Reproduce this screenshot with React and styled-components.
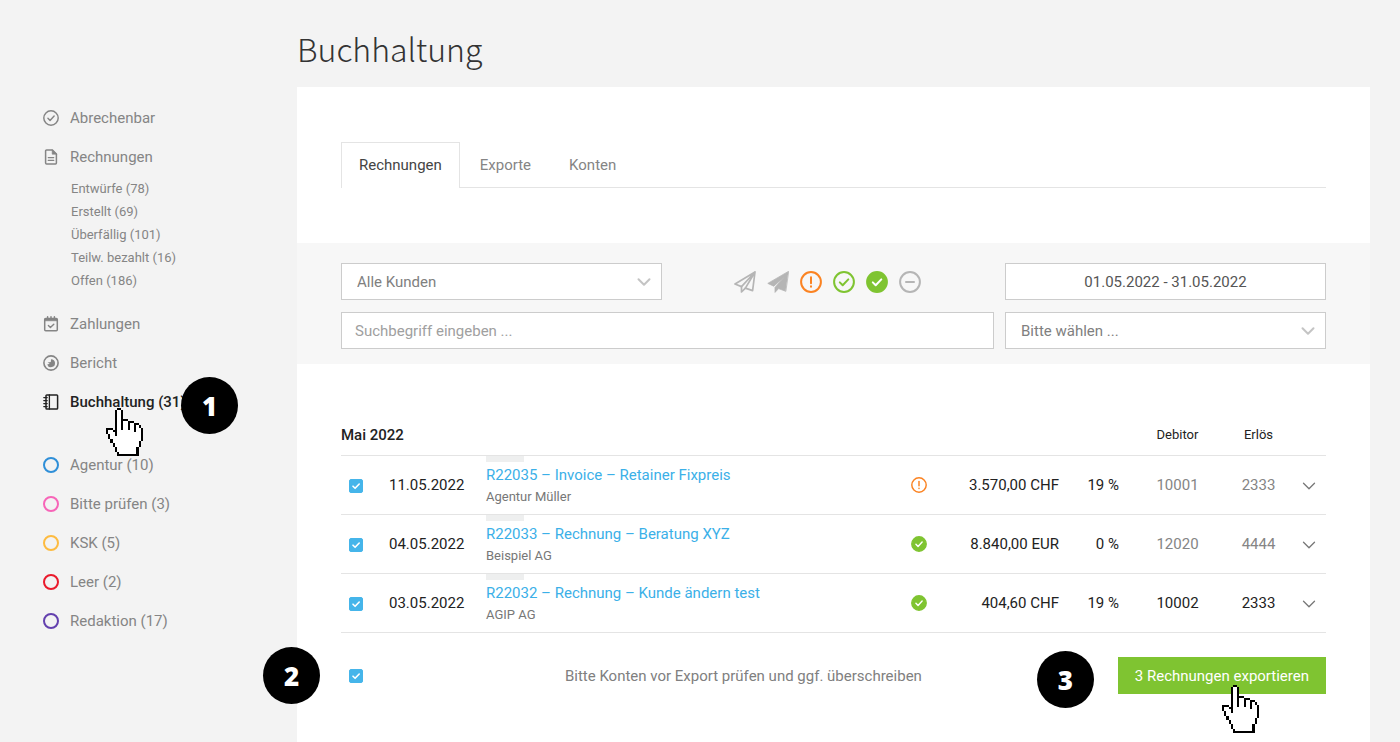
import React, { useState } from "react";
import styled, { createGlobalStyle } from "styled-components";

const rechnungenFilter = [
  "Entwürfe (78)",
  "Erstellt (69)",
  "Überfällig (101)",
  "Teilw. bezahlt (16)",
  "Offen (186)",
];

const labels = [
  { name: "Agentur (10)", color: "#2f8fd8" },
  { name: "Bitte prüfen (3)", color: "#f765b8" },
  { name: "KSK (5)", color: "#fdbb40" },
  { name: "Leer (2)", color: "#ea1a2c" },
  { name: "Redaktion (17)", color: "#6340ae" },
];

const rechnungen = [
  {
    id: "R22035",
    datum: "11.05.2022",
    titel: "R22035 – Invoice – Retainer Fixpreis",
    kunde: "Agentur Müller",
    status: "offen",
    betrag: "3.570,00 CHF",
    steuer: "19 %",
    debitor: "10001",
    erloes: "2333",
    geprueft: false,
  },
  {
    id: "R22033",
    datum: "04.05.2022",
    titel: "R22033 – Rechnung – Beratung XYZ",
    kunde: "Beispiel AG",
    status: "bezahlt",
    betrag: "8.840,00 EUR",
    steuer: "0 %",
    debitor: "12020",
    erloes: "4444",
    geprueft: false,
  },
  {
    id: "R22032",
    datum: "03.05.2022",
    titel: "R22032 – Rechnung – Kunde ändern test",
    kunde: "AGIP AG",
    status: "bezahlt",
    betrag: "404,60 CHF",
    steuer: "19 %",
    debitor: "10002",
    erloes: "2333",
    geprueft: true,
  },
];

// pixel hand, "#" = outline, "o" = fill
const hand = [
  ".....##..........",
  "....#oo#.........",
  "....#oo#.........",
  "....#oo#.........",
  "....#oo#.........",
  "....#oo###.......",
  "....#oo#oo###....",
  "....#oo#oo#oo##..",
  "....#oo#oo#oo#o#.",
  "###.#oo#oo#oo#oo#",
  "#oo##oooooooo#oo#",
  "#ooo#ooooooooooo#",
  ".#oo#ooooooooooo#",
  ".#oooooooooooooo#",
  "..#ooooooooooooo#",
  "..#oooooooooooo#.",
  "...#ooooooooooo#.",
  "...#ooooooooooo#.",
  "....#ooooooooo#..",
  "....#ooooooooo#..",
  ".....#oooooooo#..",
  ".....##########..",
];

const pixels = (char) =>
  hand
    .map((row, y) =>
      [...row].map((c, x) => (c === char ? `M${x} ${y}h1v1h-1z` : "")).join("")
    )
    .join("");

const HandCursor = ({ $left, $top }) => (
  <Cursor
    viewBox="0 0 17 22"
    shapeRendering="crispEdges"
    aria-hidden="true"
    $left={$left}
    $top={$top}
  >
    <path d={pixels("o")} fill="#fff" />
    <path d={pixels("#")} fill="#000" />
  </Cursor>
);

const CheckCircle = ({ size = 22, filled, color }) => (
  <Icon viewBox="0 0 22 22" $size={size} $color={color}>
    <circle cx="11" cy="11" r="9.9" fill={filled ? "currentColor" : "none"} />
    <path d="M6.8 11.4l2.9 2.9 5.6-5.9" stroke={filled ? "#fff" : "currentColor"} />
  </Icon>
);

const AlertCircle = ({ size = 22 }) => (
  <Icon viewBox="0 0 22 22" $size={size} $color="#fb8322">
    <circle cx="11" cy="11" r="9.9" />
    <path d="M11 6.2v6" />
    <path d="M11 15.3v.4" />
  </Icon>
);

const MinusCircle = () => (
  <Icon viewBox="0 0 22 22" $size={22} $color="#b5b5b5">
    <circle cx="11" cy="11" r="9.9" />
    <path d="M7 11h8" />
  </Icon>
);

const PlaneLine = () => (
  <Icon viewBox="0 0 22 22" $size={22} $color="#b5b5b5">
    <path d="M21 1L1 13l6.5 2.6L21 1l-2.4 18.6-7.2-2.5L21 1" strokeWidth="1.7" />
    <path d="M7.5 15.6V21l3.9-3.9" strokeWidth="1.7" />
  </Icon>
);

const PlaneSolid = () => (
  <Icon viewBox="0 0 22 22" $size={22} $color="#b5b5b5">
    <path
      d="M21.4.4L.8 12.4l6 2.8L17.6 5.8 8 16.4V21.4l3.6-3.8 6.9 2.6z"
      fill="currentColor"
      strokeWidth=".8"
    />
  </Icon>
);

const Chevron = ({ color, width }) => (
  <Icon viewBox="0 0 14 14" $size={14} $color={color}>
    <path d="M1.5 4.2L7 9.7l5.5-5.5" strokeWidth={width} />
  </Icon>
);

const FileIcon = () => (
  <Icon viewBox="0 0 16 16" $size={16}>
    <path d="M9.4 1H3.6a1 1 0 0 0-1 1v12a1 1 0 0 0 1 1h8.8a1 1 0 0 0 1-1V5z" strokeWidth="1.5" />
    <path d="M9.2 1v4.2h4.2z" fill="currentColor" strokeWidth=".6" />
    <path d="M5.3 8.6h5.4M5.3 11.4h5.4" strokeWidth="1.3" />
  </Icon>
);

const CalendarIcon = () => (
  <Icon viewBox="0 0 16 16" $size={16}>
    <rect x="1.7" y="2.6" width="12.6" height="12.2" rx="1" strokeWidth="1.5" />
    <path d="M2 2.8h12v2H2z" fill="currentColor" strokeWidth=".6" />
    <path d="M4.6.8v2M8 .8v2M11.4.8v2" strokeWidth="1.5" />
    <path d="M5.4 9.6l2 2 3.4-3.4" strokeWidth="1.4" />
  </Icon>
);

const ReportIcon = () => (
  <Icon viewBox="0 0 16 16" $size={16}>
    <circle cx="8" cy="8" r="7.1" strokeWidth="1.6" />
    <path
      d="M8 4.2a4 4 0 1 1-3.8 5.2l2.6-.6-2.2-1.4 3.2-.4z"
      fill="currentColor"
      stroke="none"
    />
  </Icon>
);

const LedgerIcon = () => (
  <Icon viewBox="0 0 16 16" $size={16}>
    <rect x="3" y="1" width="11.6" height="14" rx=".8" strokeWidth="1.5" />
    <path d="M6.4 1v14" strokeWidth="1.3" />
    <path d="M.8 3.6h3.4M.8 6.6h3.4M.8 9.6h3.4M.8 12.6h3.4" strokeWidth="1.3" />
  </Icon>
);

const Tick = ({ label, checked, onChange }) => (
  <CheckWrap>
    <Checkbox type="checkbox" aria-label={label} checked={checked} onChange={onChange} />
    {checked && (
      <Icon viewBox="0 0 14 14" $size={14} $color="#fff">
        <path d="M4 7.2l2.1 2.1L10.2 5" strokeWidth="1.6" />
      </Icon>
    )}
  </CheckWrap>
);

const App = () => {
  const [selected, setSelected] = useState(rechnungen.map((r) => r.id));
  const alle = selected.length === rechnungen.length;

  const toggle = (id) =>
    setSelected((ids) =>
      ids.includes(id) ? ids.filter((i) => i !== id) : [...ids, id]
    );

  return (
    <Page>
      <GlobalStyle />
      <Sidebar>
        <NavList>
          <NavItem>
            <NavLink href="#abrechenbar">
              <CheckCircle size={16} />
              Abrechenbar
            </NavLink>
          </NavItem>
          <NavItem>
            <NavLink href="#rechnungen">
              <FileIcon />
              Rechnungen
            </NavLink>
          </NavItem>
        </NavList>
        <SubList>
          {rechnungenFilter.map((name) => (
            <li key={name}>
              <SubLink href="#rechnungen">{name}</SubLink>
            </li>
          ))}
        </SubList>
        <NavList>
          <NavItem>
            <NavLink href="#zahlungen">
              <CalendarIcon />
              Zahlungen
            </NavLink>
          </NavItem>
          <NavItem>
            <NavLink href="#bericht">
              <ReportIcon />
              Bericht
            </NavLink>
          </NavItem>
          <NavItem>
            <NavLink href="#buchhaltung" $active>
              <LedgerIcon />
              Buchhaltung (31)
            </NavLink>
            <HandCursor $left={106} $top={26} />
            <Badge $left={181} $top={-5}>1</Badge>
          </NavItem>
        </NavList>
        <LabelList>
          {labels.map(({ name, color }) => (
            <NavItem key={name}>
              <NavLink href="#label">
                <Ring $color={color} />
                {name}
              </NavLink>
            </NavItem>
          ))}
        </LabelList>
      </Sidebar>

      <Main>
        <Title>Buchhaltung</Title>
        <Panel>
          <Tabs>
            <Tab $active>Rechnungen</Tab>
            <Tab>Exporte</Tab>
            <Tab>Konten</Tab>
          </Tabs>

          <Filters>
            <SelectWrap>
              <Select aria-label="Kunde">
                <option>Alle Kunden</option>
              </Select>
              <Chevron color="#c4c4c4" width="2" />
            </SelectWrap>
            <StatusFilter>
              <IconButton aria-label="Nicht versendet"><PlaneLine /></IconButton>
              <IconButton aria-label="Versendet"><PlaneSolid /></IconButton>
              <IconButton aria-label="Überfällig"><AlertCircle /></IconButton>
              <IconButton aria-label="Teilweise bezahlt"><CheckCircle color="#7fc431" /></IconButton>
              <IconButton aria-label="Bezahlt"><CheckCircle color="#7fc431" filled /></IconButton>
              <IconButton aria-label="Storniert"><MinusCircle /></IconButton>
            </StatusFilter>
            <DateInput aria-label="Zeitraum" defaultValue="01.05.2022 - 31.05.2022" />
            <Search aria-label="Suche" placeholder="Suchbegriff eingeben ..." />
            <SelectWrap>
              <Select aria-label="Auswahl">
                <option>Bitte wählen ...</option>
              </Select>
              <Chevron color="#c4c4c4" width="2" />
            </SelectWrap>
          </Filters>

          <Content>
            <Table>
              <colgroup>
                <Col $width={48} />
                <Col $width={97} />
                <col />
                <Col $width={40} />
                <Col $width={120} />
                <Col $width={60} />
                <Col $width={117} />
                <Col $width={45} />
                <Col $width={45} />
              </colgroup>
              <thead>
                <tr>
                  <Month colSpan={6}>Mai 2022</Month>
                  <Head>Debitor</Head>
                  <Head>Erlös</Head>
                  <Head />
                </tr>
              </thead>
              <tbody>
                {rechnungen.map((r) => (
                  <tr key={r.id}>
                    <CheckCell>
                      <Tick
                        label={r.id}
                        checked={selected.includes(r.id)}
                        onChange={() => toggle(r.id)}
                      />
                    </CheckCell>
                    <Cell>{r.datum}</Cell>
                    <TitleCell>
                      <Tag />
                      <InvoiceLink href={`#${r.id}`}>{r.titel}</InvoiceLink>
                      <Customer>{r.kunde}</Customer>
                    </TitleCell>
                    <Cell $align="center">
                      {r.status === "offen" ? (
                        <AlertCircle size={16} />
                      ) : (
                        <CheckCircle size={16} color="#7fc431" filled />
                      )}
                    </Cell>
                    <Cell $align="right">{r.betrag}</Cell>
                    <Cell $align="right">{r.steuer}</Cell>
                    <Cell $align="center" $muted={!r.geprueft}>{r.debitor}</Cell>
                    <Cell $align="center" $muted={!r.geprueft}>{r.erloes}</Cell>
                    <ToggleCell>
                      <IconButton aria-label="Details">
                        <Chevron color="#777" width="1.3" />
                      </IconButton>
                    </ToggleCell>
                  </tr>
                ))}
              </tbody>
            </Table>

            <Footer>
              <Tick
                label="Alle auswählen"
                checked={alle}
                onChange={() => setSelected(alle ? [] : rechnungen.map((r) => r.id))}
              />
              <Hint>Bitte Konten vor Export prüfen und ggf. überschreiben</Hint>
              <ExportWrap>
                <ExportButton>{selected.length} Rechnungen exportieren</ExportButton>
                <HandCursor $left={104} $top={28} />
                <Badge $left={-81} $top={-6}>3</Badge>
              </ExportWrap>
              <Badge $left={-78} $top={-10}>2</Badge>
            </Footer>
          </Content>
        </Panel>
      </Main>
    </Page>
  );
};

const GlobalStyle = createGlobalStyle`
  * {
    box-sizing: border-box;
  }

  body {
    margin: 0;
    background: #f3f3f3;
    color: #222;
    font-family: Roboto, sans-serif;
    font-size: 15px;
  }

  button, input, select {
    font: inherit;
    color: inherit;
  }
`;

const Page = styled.div`
  display: flex;
  min-height: 100vh;
`;

const Sidebar = styled.nav`
  width: 297px;
  flex-shrink: 0;
  padding-top: 98px;
`;

const NavList = styled.ul`
  list-style: none;
  margin: 0;
  padding: 0;
`;

const LabelList = styled(NavList)`
  margin-top: 24px;
`;

const NavItem = styled.li`
  position: relative;
`;

const NavLink = styled.a`
  display: flex;
  align-items: center;
  gap: 11px;
  height: 39px;
  padding-left: 43px;
  text-decoration: none;
  color: ${({ $active }) => ($active ? "#222" : "#858585")};
  font-weight: ${({ $active }) => ($active ? 500 : 400)};
`;

const SubList = styled(NavList)`
  margin: 1px 0 12px;
  padding-left: 71px;
`;

const SubLink = styled.a`
  display: block;
  font-size: 13px;
  line-height: 23px;
  color: #858585;
  text-decoration: none;
`;

const Ring = styled.span`
  width: 16px;
  height: 16px;
  border: 2px solid ${({ $color }) => $color};
  border-radius: 50%;
`;

const Icon = styled.svg`
  display: block;
  flex-shrink: 0;
  width: ${({ $size }) => $size}px;
  height: ${({ $size }) => $size}px;
  color: ${({ $color }) => $color || "inherit"};
  fill: none;
  stroke: currentColor;
  stroke-width: 2;
  stroke-linecap: round;
  stroke-linejoin: round;
`;

const Cursor = styled.svg`
  position: absolute;
  z-index: 1;
  left: ${({ $left }) => $left}px;
  top: ${({ $top }) => $top}px;
  width: 37px;
  height: 48px;
  pointer-events: none;
`;

const Badge = styled.span`
  position: absolute;
  left: ${({ $left }) => $left}px;
  top: ${({ $top }) => $top}px;
  display: flex;
  align-items: center;
  justify-content: center;
  width: 57px;
  height: 57px;
  border-radius: 50%;
  background: #000;
  color: #fff;
  font-family: "Open Sans", sans-serif;
  font-size: 26px;
  font-weight: 800;
`;

const Main = styled.main`
  flex: 1;
  min-width: 0;
  display: flex;
  flex-direction: column;
  padding-right: 30px;
`;

const Title = styled.h1`
  margin: 0;
  padding-top: 24px;
  height: 87px;
  font-family: "Noto Sans CJK JP", "Noto Sans CJK SC", sans-serif;
  font-size: 32px;
  font-weight: 300;
  line-height: 48px;
  color: #333;
`;

const Panel = styled.section`
  flex: 1;
  padding-top: 55px;
  background: #fff;
`;

const Tabs = styled.div`
  display: flex;
  gap: 2px;
  margin: 0 44px 55px;
  border-bottom: 1px solid #e4e4e4;
`;

const Tab = styled.button`
  height: 46px;
  margin-bottom: -1px;
  padding: 0 17px 2px;
  background: ${({ $active }) => ($active ? "#fff" : "transparent")};
  border: 1px solid ${({ $active }) => ($active ? "#e4e4e4" : "transparent")};
  border-bottom: 0;
  color: ${({ $active }) => ($active ? "#444" : "#858585")};
`;

const Filters = styled.div`
  display: grid;
  grid-template-columns: repeat(3, 1fr);
  gap: 12px 11px;
  padding: 20px 44px 15px;
  background: #f7f7f7;
`;

const SelectWrap = styled.div`
  display: grid;
  align-items: center;

  > * {
    grid-area: 1 / 1;
  }

  svg {
    justify-self: end;
    margin-right: 11px;
    pointer-events: none;
  }
`;

const Select = styled.select`
  appearance: none;
  width: 100%;
  height: 37px;
  padding: 0 15px;
  background: #fff;
  border: 1px solid #ccc;
  border-radius: 0;
  color: #808080;
`;

const Field = styled.input`
  width: 100%;
  height: 37px;
  padding: 0 13px;
  background: #fff;
  border: 1px solid #ccc;
  border-radius: 0;

  &::placeholder {
    color: #a0a0a0;
  }
`;

const DateInput = styled(Field)`
  text-align: center;
  color: #555;
`;

const Search = styled(Field)`
  grid-column: span 2;
`;

const StatusFilter = styled.div`
  display: flex;
  align-items: center;
  justify-content: center;
  gap: 11px;
  padding-right: 12px;
`;

const IconButton = styled.button`
  display: inline-flex;
  vertical-align: middle;
  padding: 0;
  background: none;
  border: 0;
`;

const Content = styled.div`
  padding: 50px 44px 0;
`;

const Table = styled.table`
  width: 100%;
  table-layout: fixed;
  border-spacing: 0;

  th,
  td {
    padding: 0;
    border-bottom: 1px solid #e4e4e4;
  }
`;

const Col = styled.col`
  width: ${({ $width }) => $width}px;
`;

const Head = styled.th`
  height: 42px;
  font-size: 13px;
  font-weight: 400;
`;

const Month = styled(Head)`
  font-size: 15px;
  font-weight: 500;
  text-align: left;
`;

const Cell = styled.td`
  height: 59px;
  text-align: ${({ $align }) => $align || "left"};
  color: ${({ $muted }) => ($muted ? "#858585" : "#222")};

  svg {
    margin: 0 auto;
  }
`;

const CheckCell = styled(Cell)`
  && {
    padding-left: 8px;
  }
`;

const ToggleCell = styled(Cell)`
  && {
    padding-right: 10px;
    text-align: right;
  }
`;

const TitleCell = styled(Cell)`
  vertical-align: top;
`;

const Tag = styled.div`
  width: 38px;
  height: 6px;
  margin-bottom: 3px;
  background: #eeefef;
`;

const InvoiceLink = styled.a`
  display: block;
  line-height: 21px;
  color: #3bb0e8;
  text-decoration: none;
`;

const Customer = styled.div`
  font-size: 13px;
  line-height: 21px;
  color: #777;
`;

const CheckWrap = styled.span`
  display: inline-grid;
  vertical-align: middle;

  > * {
    grid-area: 1 / 1;
  }

  svg {
    margin: 0;
    pointer-events: none;
  }
`;

const Checkbox = styled.input`
  appearance: none;
  width: 14px;
  height: 14px;
  margin: 0;
  border: 1px solid #45b5ea;
  border-radius: 2px;
  background: #fff;

  &:checked {
    background: #45b5ea;
  }
`;

const Footer = styled.div`
  position: relative;
  display: flex;
  align-items: center;
  margin-top: 24px;
  padding-left: 8px;
`;

const Hint = styled.p`
  flex: 1;
  margin: 0;
  padding-left: 6px;
  text-align: center;
  color: #808080;
`;

const ExportWrap = styled.div`
  position: relative;
`;

const ExportButton = styled.button`
  height: 37px;
  padding: 0 17px;
  background: #7fc431;
  border: 0;
  color: #fff;
`;

export default App;
